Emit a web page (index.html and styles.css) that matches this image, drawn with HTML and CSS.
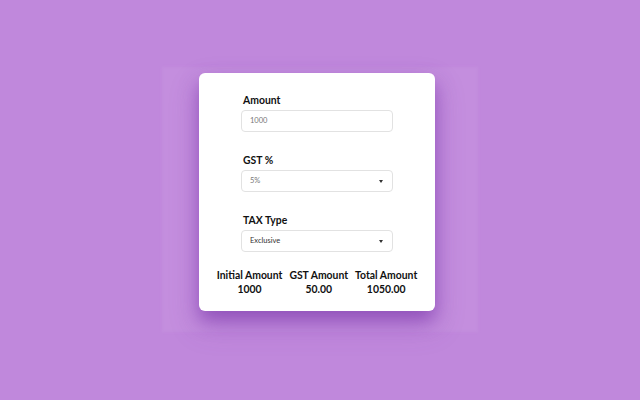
FILE: index.html
```html
<!DOCTYPE html>
<html lang="en">
<head>
<meta charset="utf-8">
<title>GST Calculator</title>
<link rel="stylesheet" href="styles.css">
</head>
<body>
<div class="stage">
  <div class="card">
    <div class="form">
      <div class="group">
        <label class="label" for="amount">Amount</label>
        <div class="field"><span class="value muted">1000</span></div>
      </div>
      <div class="group">
        <label class="label">GST %</label>
        <div class="field select"><span class="value muted">5%</span><span class="caret"></span></div>
      </div>
      <div class="group">
        <label class="label">TAX Type</label>
        <div class="field select"><span class="value dark">Exclusive</span><span class="caret"></span></div>
      </div>
    </div>
    <div class="results">
      <div class="result"><div class="r-label">Initial Amount</div><div class="r-value">1000</div></div>
      <div class="result"><div class="r-label">GST Amount</div><div class="r-value">50.00</div></div>
      <div class="result"><div class="r-label">Total Amount</div><div class="r-value">1050.00</div></div>
    </div>
  </div>
</div>
</body>
</html>
```
FILE: styles.css
```css
html {
  background: #c088dc;
}
html, body {
  margin: 0;
  padding: 0;
  width: 640px;
  height: 400px;
  overflow: hidden;
  font-family: Lato, "Noto Sans", sans-serif;
}
.stage {
  padding-top: 73px;
  padding-left: 199px;
}
.card {
  position: relative;
  width: 236px;
  height: 238px;
  box-sizing: border-box;
  background: #ffffff;
  border-radius: 6px;
  padding-top: 20px;
  box-shadow: 0 10px 18px rgba(110, 40, 160, 0.5), 0 14px 30px rgba(140, 70, 190, 0.25);
  display: flex;
  flex-direction: column;
  align-items: center;
}
.card::before {
  content: "";
  position: absolute;
  left: -37px;
  right: -43px;
  top: -6px;
  bottom: -21px;
  background: rgba(210, 165, 232, 0.22);
  filter: blur(1.5px);
  z-index: -1;
}
.form {
  width: 152px;
  display: flex;
  flex-direction: column;
}
.group {
  display: flex;
  flex-direction: column;
  margin-bottom: 21px;
}
.group:last-child { margin-bottom: 16px; }
.label {
  font-size: 10.4px;
  font-weight: 700;
  line-height: 14px;
  color: #111;
  padding-left: 2px;
  margin-bottom: 3px;
}
.field {
  height: 22px;
  box-sizing: border-box;
  border: 1px solid #e2e2e2;
  border-radius: 4px;
  display: flex;
  align-items: center;
  justify-content: space-between;
  padding: 0 9px 0 8px;
}
.value {
  font-size: 7.5px;
  line-height: 10px;
}
.muted { color: #777; }
.dark { color: #333; }
.caret {
  width: 0;
  height: 0;
  border-left: 2.5px solid transparent;
  border-right: 2.5px solid transparent;
  border-top: 3px solid #333;
}
.results {
  display: flex;
  gap: 7px;
  justify-content: center;
}
.result {
  text-align: center;
  font-size: 10.4px;
  font-weight: 700;
  line-height: 14px;
  color: #111;
  white-space: nowrap;
}
```
